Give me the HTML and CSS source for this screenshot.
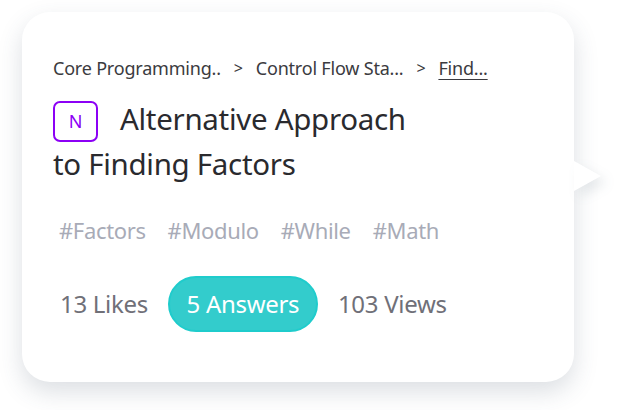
FILE: index.html
```html
<!DOCTYPE html>
<html lang="en">
<head>
    <meta charset="UTF-8">
    <title>Question card</title>
    <link rel="stylesheet" href="styles.css">
</head>
<body>
    <div class="card">
        <div class="crumbs">
            <span>Core Programming..</span>
            <span class="sep">&gt;</span>
            <span>Control Flow Sta...</span>
            <span class="sep">&gt;</span>
            <a href="#" class="current">Find...</a>
        </div>

        <h2 class="title"><span class="badge">N</span>Alternative Approach<br>to Finding Factors</h2>

        <div class="tags">
            <span>#Factors</span>
            <span>#Modulo</span>
            <span>#While</span>
            <span>#Math</span>
        </div>

        <div class="stats">
            <span>13 Likes</span>
            <span class="pill">5 Answers</span>
            <span>103 Views</span>
        </div>
    </div>
</body>
</html>
```

FILE: styles.css
```css
html {
    height: 100%;
}
body {
    margin: 0;
    min-height: 410px;
    padding-top: 12px;
    box-sizing: border-box;
    background: #fff;
    font-family: "Noto Sans", "Open Sans", sans-serif;
}
.card {
    position: relative;
    margin-left: 22px;
    width: 552px;
    height: 370px;
    box-sizing: border-box;
    padding: 44px 30px 0 31px;
    background: #fff;
    border-radius: 28px;
    box-shadow: 0 10px 24px rgba(60, 80, 100, 0.18);
}
.card::after {
    content: "";
    position: absolute;
    right: -27px;
    top: 149px;
    border-left: 27px solid #fff;
    border-top: 15px solid transparent;
    border-bottom: 15px solid transparent;
    filter: drop-shadow(6px 6px 6px rgba(60, 80, 100, 0.12));
}
.crumbs {
    display: flex;
    align-items: center;
    gap: 13px;
    font-size: 18px;
    color: #3b3b40;
    letter-spacing: -0.2px;
}
.crumbs .sep {
    font-size: 16px;
}
.crumbs .current {
    color: #3b3b40;
    text-decoration: underline;
    text-underline-offset: 4px;
}
.title {
    margin: 17px 0 0;
    font-size: 29.5px;
    font-weight: 400;
    line-height: 44px;
    color: #2a2a2e;
    letter-spacing: -0.3px;
}
.badge {
    display: inline-flex;
    align-items: center;
    justify-content: center;
    width: 41px;
    height: 37px;
    margin-right: 22px;
    border: 2px solid #8c00f5;
    border-radius: 7px;
    color: #8c00f5;
    font-size: 18px;
    vertical-align: 2px;
}
.tags {
    display: flex;
    gap: 22px;
    margin: 29px 0 0 6px;
    font-size: 22px;
    color: #a8abb7;
    letter-spacing: -0.35px;
}
.stats {
    display: flex;
    align-items: center;
    gap: 20px;
    margin: 31px 0 0 7px;
    font-size: 24px;
    color: #707078;
    letter-spacing: -0.3px;
}
.pill {
    display: flex;
    align-items: center;
    justify-content: center;
    width: 150px;
    height: 56px;
    box-sizing: border-box;
    border: 2px solid #1fcccc;
    border-radius: 28px;
    background: #33cccc;
    color: #fff;
}
```
